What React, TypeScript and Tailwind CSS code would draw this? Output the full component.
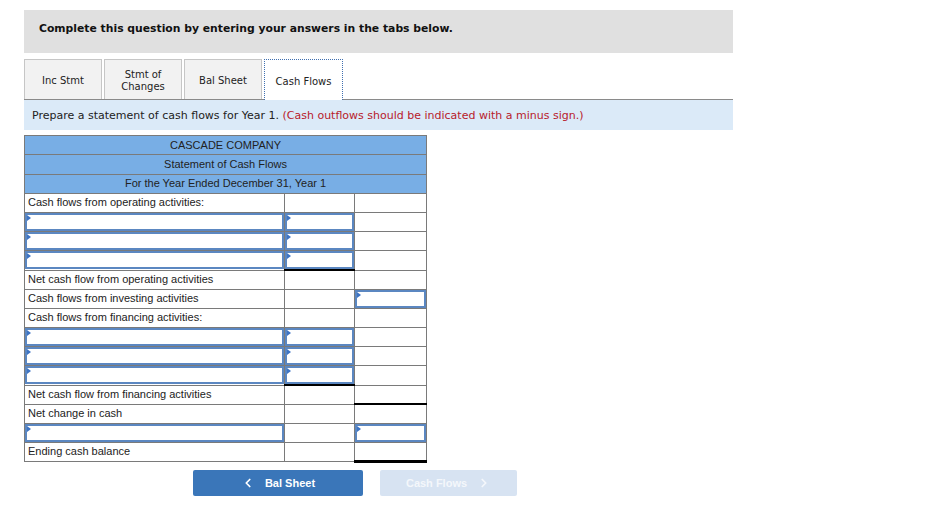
import { ChevronLeft, ChevronRight } from 'lucide-react';

type Cell = 'text' | 'blank' | 'input' | 'inputBlackBottom' | 'blackBottom' | 'doubleBottom';

interface Row {
  label?: string;
  input?: boolean;
  c2: Cell;
  c3: Cell;
}

const rows: Row[] = [
  { label: 'Cash flows from operating activities:', c2: 'blank', c3: 'blank' },
  { input: true, c2: 'input', c3: 'blank' },
  { input: true, c2: 'input', c3: 'blank' },
  { input: true, c2: 'inputBlackBottom', c3: 'blank' },
  { label: 'Net cash flow from operating activities', c2: 'blank', c3: 'blank' },
  { label: 'Cash flows from investing activities', c2: 'blank', c3: 'input' },
  { label: 'Cash flows from financing activities:', c2: 'blank', c3: 'blank' },
  { input: true, c2: 'input', c3: 'blank' },
  { input: true, c2: 'input', c3: 'blank' },
  { input: true, c2: 'inputBlackBottom', c3: 'blank' },
  { label: 'Net cash flow from financing activities', c2: 'blank', c3: 'blackBottom' },
  { label: 'Net change in cash', c2: 'blank', c3: 'blank' },
  { input: true, c2: 'blank', c3: 'input' },
  { label: 'Ending cash balance', c2: 'blank', c3: 'doubleBottom' },
];

function InputBox(): JSX.Element {
  return (
    <div className="relative h-[18px] w-full border-2 border-[#5b87c1] bg-white">
      <span className="absolute left-0 top-0 h-0 w-0 border-y-[3px] border-l-[4px] border-y-transparent border-l-[#3d74c4]" />
    </div>
  );
}

function ValueCell({ kind }: { kind: Cell }): JSX.Element {
  const bottom =
    kind === 'inputBlackBottom' || kind === 'blackBottom'
      ? 'border-b-2 border-b-black'
      : kind === 'doubleBottom'
        ? 'border-b-[3px] border-b-black'
        : '';
  return (
    <td className={`h-[19.1px] border border-[#7a7a7a] p-0 ${bottom}`}>
      {(kind === 'input' || kind === 'inputBlackBottom') && <InputBox />}
    </td>
  );
}

export default function App(): JSX.Element {
  const tabs = ['Inc Stmt', 'Stmt of\nChanges', 'Bal Sheet'];

  return (
    <div className="h-[520px] w-[926px] bg-white pt-[10px] font-['DejaVu_Sans',sans-serif] text-black">
      <div className="ml-[24px] w-[709px]">
        <div className="h-[43px] bg-[#e0e0e0] pl-[15px] pt-[11px] text-[10.8px] font-bold text-[#111]">
          Complete this question by entering your answers in the tabs below.
        </div>

        <div className="mt-[7px] flex h-[40px] items-end gap-[2px] border-b border-[#8a8a8a]">
          {tabs.map((t) => (
            <div
              key={t}
              className="flex h-[40px] w-[78px] items-center justify-center whitespace-pre border border-b-0 border-[#c6c6c6] bg-[#f2f2f2] pt-[2px] text-center text-[10px] leading-[12px] text-[#222]"
            >
              {t}
            </div>
          ))}
          <div className="-mb-px flex h-[41px] w-[79px] items-center justify-center border border-b-0 border-dotted border-[#3f6fb0] bg-white pt-[2px] text-[10px] text-[#222]">
            Cash Flows
          </div>
        </div>

        <div className="flex h-[30px] items-center bg-[#dbeaf8] pl-[8px] pt-[2px] text-[11px] text-[#222]">
          Prepare a statement of cash flows for Year 1.&nbsp;
          <span className="text-[#b8202b]">(Cash outflows should be indicated with a minus sign.)</span>
        </div>
      </div>

      <table className="ml-[24px] mt-[5px] w-[402px] table-fixed border-collapse font-['Liberation_Sans',Arial,sans-serif] text-[11px] text-[#222]">
        <colgroup>
          <col className="w-[260px]" />
          <col className="w-[70px]" />
          <col className="w-[72px]" />
        </colgroup>
        <tbody>
          {['CASCADE COMPANY', 'Statement of Cash Flows', 'For the Year Ended December 31, Year 1'].map((h) => (
            <tr key={h}>
              <td colSpan={3} className="h-[19.3px] border border-[#7a7a7a] bg-[#78aee5] p-0 text-center leading-[17px]">
                {h}
              </td>
            </tr>
          ))}
          {rows.map((r, i) => (
            <tr key={i}>
              <td className="h-[19.1px] border border-[#7a7a7a] p-0 pl-[3px] leading-[17px]">
                {r.input ? (
                  <div className="-ml-[3px]">
                    <InputBox />
                  </div>
                ) : (
                  r.label
                )}
              </td>
              <ValueCell kind={r.c2} />
              <ValueCell kind={r.c3} />
            </tr>
          ))}
        </tbody>
      </table>

      <div className="ml-[193px] mt-[7px] flex gap-[17px] font-['Liberation_Sans',Arial,sans-serif] text-[11px] font-bold text-white">
        <button className="flex h-[26px] w-[170px] items-center justify-center gap-[10px] rounded-[2px] bg-[#3a76b9]">
          <ChevronLeft size={14} strokeWidth={3} />
          Bal Sheet
        </button>
        <button className="flex h-[26px] w-[137px] items-center justify-center gap-[10px] rounded-[2px] bg-[#d7e3f2] text-[#f4f7fb]">
          Cash Flows
          <ChevronRight size={14} strokeWidth={3} />
        </button>
      </div>
    </div>
  );
}
